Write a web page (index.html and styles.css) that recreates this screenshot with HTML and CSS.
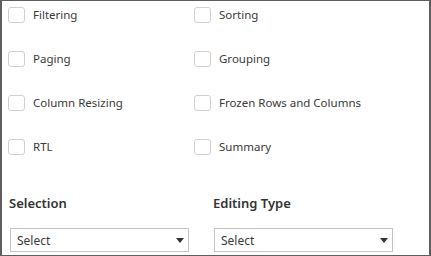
FILE: index.html
```html
<!DOCTYPE html>
<html>
<head>
<meta charset="utf-8">
<link rel="stylesheet" href="styles.css">
</head>
<body>
<div class="panel">
  <div class="options">
    <label class="opt"><span class="box"></span><span>Filtering</span></label>
    <label class="opt"><span class="box"></span><span>Sorting</span></label>
    <label class="opt"><span class="box"></span><span>Paging</span></label>
    <label class="opt"><span class="box"></span><span>Grouping</span></label>
    <label class="opt"><span class="box"></span><span>Column Resizing</span></label>
    <label class="opt"><span class="box"></span><span>Frozen Rows and Columns</span></label>
    <label class="opt"><span class="box"></span><span>RTL</span></label>
    <label class="opt"><span class="box"></span><span>Summary</span></label>
  </div>
  <div class="selects">
    <div class="field">
      <div class="heading">Selection</div>
      <div class="select"><span>Select</span><svg class="caret" width="8" height="5" viewBox="0 0 8 5"><path d="M0 0H8L4 5Z" fill="#333"/></svg></div>
    </div>
    <div class="field">
      <div class="heading">Editing Type</div>
      <div class="select"><span>Select</span><svg class="caret" width="8" height="5" viewBox="0 0 8 5"><path d="M0 0H8L4 5Z" fill="#333"/></svg></div>
    </div>
  </div>
</div>
</body>
</html>
```
FILE: styles.css
```css
html, body {
  margin: 0;
  padding: 0;
  background: #fff;
}
body {
  font-family: "Noto Sans", "Open Sans", sans-serif;
  color: #3a3a3a;
}
.panel {
  box-sizing: border-box;
  width: 431px;
  height: 256px;
  border: 1px solid #5f5f5f;
  border-left-width: 2px;
  border-right-width: 2px;
  overflow: hidden;
}
.options {
  display: grid;
  grid-template-columns: 186px 1fr;
  row-gap: 28px;
  padding: 6px 0 0 6px;
}
.opt {
  display: flex;
  align-items: center;
  gap: 8px;
  height: 16px;
  font-size: 11.5px;
  line-height: 16px;
}
.box {
  box-sizing: border-box;
  width: 17px;
  height: 16px;
  border: 1px solid #d0d0d0;
  border-radius: 3px;
  background: #fff;
  flex: none;
}
.selects {
  display: grid;
  grid-template-columns: 204px 179px;
  padding: 39px 0 0 8px;
}
.heading {
  font-size: 13px;
  font-weight: 600;
  line-height: 18px;
  margin-left: -1px;
  color: #333;
}
.select {
  box-sizing: border-box;
  width: 179px;
  margin-top: 16px;
  height: 24px;
  border: 1px solid #c4c4c4;
  display: flex;
  align-items: center;
  justify-content: space-between;
  padding: 0 4px 0 6px;
  font-size: 12px;
}
.caret {
  display: block;
}
```
